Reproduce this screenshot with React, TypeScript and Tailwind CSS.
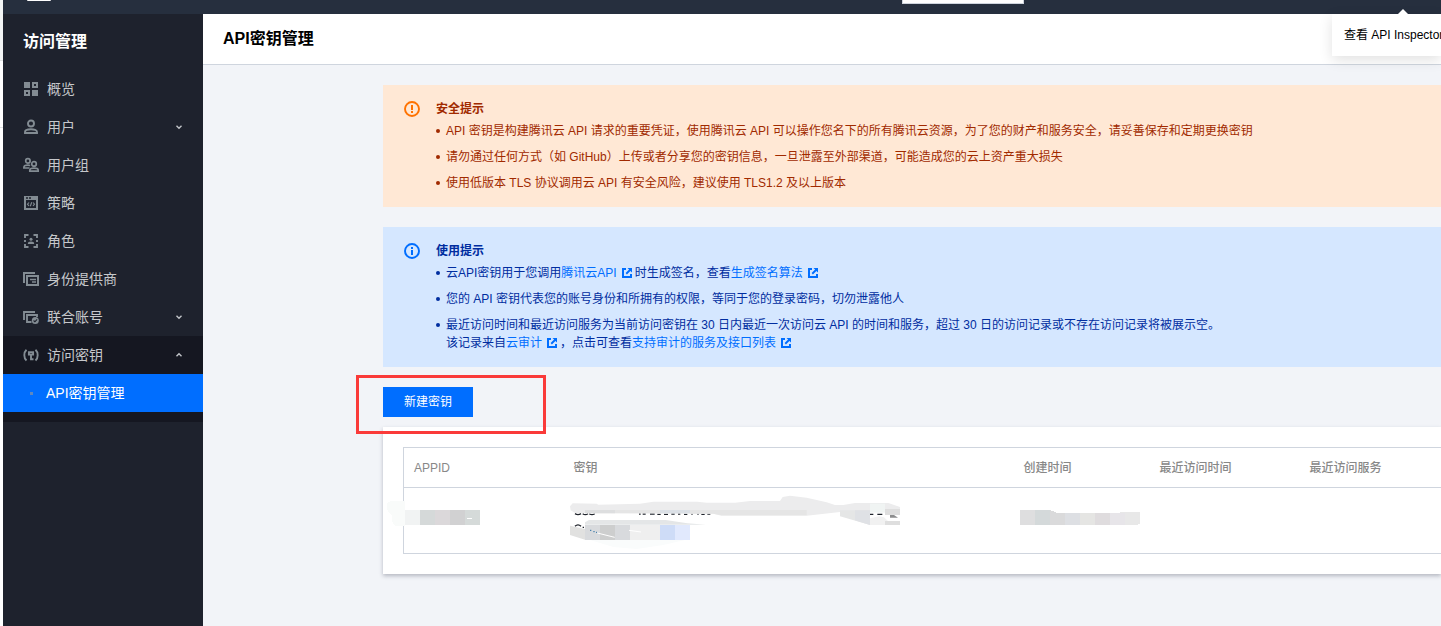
import type { ReactNode } from "react"
import clsx from "clsx"

type IconName = "overview" | "user" | "group" | "policy" | "role" | "provider" | "union" | "key"

const menu: { label: string; icon: IconName; expandable?: boolean }[] = [
  { label: "概览", icon: "overview" },
  { label: "用户", icon: "user", expandable: true },
  { label: "用户组", icon: "group" },
  { label: "策略", icon: "policy" },
  { label: "角色", icon: "role" },
  { label: "身份提供商", icon: "provider" },
  { label: "联合账号", icon: "union", expandable: true },
]

const iconShapes: Record<IconName, ReactNode> = {
  overview: (
    <path
      fill="currentColor"
      fillRule="evenodd"
      d="M1 1h6v6H1zM9 1h6v6H9zM11 3v2h2V3zM1 9h6v6H1zM3 11v2h2v-2zM9 9h6v6H9z"
    />
  ),
  user: (
    <g fill="none" stroke="currentColor" strokeWidth="1.9">
      <circle cx="8" cy="4.5" r="3" />
      <path d="M2 14v-.9C2 11 5 10.300 8 10.300s6 .7 6 2.800v.9z" />
    </g>
  ),
  group: (
    <g fill="none" stroke="currentColor" strokeWidth="1.700">
      <circle cx="4.900" cy="3.900" r="2.200" />
      <path d="M6.500 11H.9v-.6C.9 8.900 2.800 8.200 5 8.200c.8 0 1.500.1 2.200.3" />
      <circle cx="11" cy="6.900" r="2.300" />
      <path d="M6.800 14.100v-.8c0-1.500 2-2.100 4.200-2.100s4.200.6 4.200 2.100v.8z" />
    </g>
  ),
  policy: (
    <g fill="none" stroke="currentColor">
      <path d="M1 1h14v14H1zM3 5v8h10V5z" fill="currentColor" fillRule="evenodd" stroke="none" />
      <path d="M3 3h2M6 3h2" stroke="#1e222d" strokeWidth="1.500" />
      <path d="M6 7.500 4.500 9.200 6 11M10 7.500l1.500 1.700L10 11M8.700 7.200l-1.400 4" strokeWidth="1.100" />
    </g>
  ),
  role: (
    <g fill="none" stroke="currentColor" strokeWidth="1.900">
      <path d="M2 5V2h3.500M10.500 2H14v3M14 11v3h-3.500M5.500 14H2v-3M2 7v2M14 7v2" />
      <circle cx="8" cy="6.200" r="1.500" fill="currentColor" stroke="none" />
      <path d="M4.800 11c0-2 1.200-2.600 3.200-2.600s3.200.6 3.200 2.600z" fill="currentColor" stroke="none" />
    </g>
  ),
  provider: (
    <g fill="none" stroke="currentColor" strokeWidth="2">
      <path d="M1 12V2h11" />
      <path d="M4 5h11v9H4z" />
      <path d="M7 8.500h6M9 11h4" strokeWidth="1.300" />
    </g>
  ),
  union: (
    <g fill="none" stroke="currentColor" strokeWidth="1.900">
      <path d="M1 11V3h11" />
      <path d="M8.500 13H4V6h10v2" />
      <circle cx="12.300" cy="11.500" r="3.500" fill="currentColor" stroke="none" />
      <path d="m10.600 11.500 1.300 1.300 2.200-2.400" stroke="#1e222d" strokeWidth="1.100" />
    </g>
  ),
  key: (
    <g fill="none" stroke="currentColor" strokeWidth="1.900">
      <path d="M3.500 2.800C.6 5.500.6 10.800 3.500 13.500M12.500 2.800c2.900 2.700 2.900 8 0 10.700" />
      <path d="M5.900 5.200h4.200v2.400H5.900zM8 8v5.200M8 12.200h2.500" />
    </g>
  ),
}

function MenuIcon({ name }: { name: IconName }) {
  return (
    <svg viewBox="0 0 16 16" className="size-4 shrink-0 text-[#838c93]" aria-hidden="true">
      {iconShapes[name]}
    </svg>
  )
}

function Chevron({ up }: { up?: boolean }) {
  return (
    <svg viewBox="0 0 8 8" className={clsx("ml-auto size-2", up && "rotate-180")} aria-hidden="true">
      <path d="m1.500 2.800 2.500 2.400 2.500-2.400" fill="none" stroke="#c3c6ca" strokeWidth="1.400" />
    </svg>
  )
}

function ExternalLink({ children }: { children: ReactNode }) {
  return (
    <a href="#" className="text-[#006eff]">
      {children}
      <svg viewBox="0 0 12 12" className="mr-0.5 ml-1 inline-block size-3 align-[-2px]" aria-hidden="true">
        <path d="M5 2H2v8h8V7" fill="none" stroke="currentColor" strokeWidth="2" />
        <path d="M6.500 1H11v4.500L9.400 3.900 5.900 7.400 4.600 6.100l3.500-3.500z" fill="currentColor" />
      </svg>
    </a>
  )
}

function Notice({ tone, title, items }: { tone: "warning" | "info"; title: string; items: ReactNode[] }) {
  const warning = tone === "warning"
  return (
    <section
      className={clsx(
        "flex gap-4 px-[21px] py-[15px] text-xs leading-[18px]",
        warning ? "bg-[#ffe8d5] text-[#a12a00]" : "bg-[#d5e7ff] text-[#002da0]",
      )}
    >
      <svg
        viewBox="0 0 16 16"
        className={clsx("mt-px size-4 shrink-0", warning ? "text-[#ff7200]" : "text-[#006eff]")}
        aria-hidden="true"
      >
        <circle cx="8" cy="8" r="7" fill="none" stroke="currentColor" strokeWidth="1.900" />
        <path
          d={warning ? "M7 4h2v5H7zM7 10h2v2H7z" : "M7 4h2v2H7zM7 7h2v5H7z"}
          fill="currentColor"
        />
      </svg>
      <div className="min-w-0 flex-1">
        <h2 className="mb-1 font-bold">{title}</h2>
        <ul className="flex flex-col gap-2">
          {items.map((item, i) => (
            <li key={i} className="flex gap-1.5">
              <span className="mt-[7px] size-1 shrink-0 rounded-full bg-current" />
              <div>{item}</div>
            </li>
          ))}
        </ul>
      </div>
    </section>
  )
}

function AppIdMask() {
  return (
    <svg viewBox="105 384 300 90" className="absolute top-2.5 -left-[19px] h-[30px] w-[100px]" shapeRendering="crispEdges" aria-hidden="true">
      <path d="M111 402q4-9 20-9h34v75h-27q-12-4-12-20v-12q-15-8-15-28z" fill="#f9fbfa" />
      <path d="M165 420h45v45h-45z" fill="#f1f3f3" />
      <path d="M210 420h45v45h-45z" fill="#d5d9d9" />
      <path d="M255 420h45v45h-45z" fill="#dbd8da" />
      <path d="M300 420h45v45h-45z" fill="#d1d1d2" />
      <path d="M345 420h45v45h-45z" fill="#d5dad9" />
      <path d="M351 443h15v4h-15z" fill="#fff" />
    </svg>
  )
}

function SecretMask() {
  return (
    <svg viewBox="0 0 1050 195" className="absolute -top-[3px] -left-1 h-[65px] w-[350px]" aria-hidden="true">
      <path
        d="M45 86q9 6 18 0M68 86q8 6 16 0M88 86q8 6 16 0M237 87h5M248 87h9M270 87h14M292 88h10M312 88h12M334 87h10M354 87h7M372 88h10M394 87h4M412 87h4M424 88h10M442 87h9M917 84h5M930 88h10M952 88h15"
        fill="none"
        stroke="#20242c"
        strokeWidth="4"
      />
      <path d="M45 124q9-9 18 0M68 127h4" fill="none" stroke="#20242c" strokeWidth="4" />
      <path
        d="M30 64L38 55 110 56 115 59 240 56 280 50H412L440 53H525L570 48H660L668 36 690 32 740 38 800 52 825 60H850L885 54H985L1020 66V80H930V84L840 81 740 92H484L460 86 45 84 32 76z"
        fill="#ececed"
      />
      <path d="M75 75h90v10H75z" fill="#dddedf" />
      <path d="M165 75h135v10H165zM390 75h350v16H484l-24-5h-70z" fill="#e5e5e5" />
      <path d="M300 75h90v10h-90z" fill="#dbe0e6" />
      <path d="M840 76h90v44l-90-26z" fill="#e5e6e6" />
      <path d="M885 76h45v44l-45-14z" fill="#dfe1e5" />
      <path d="M930 56h45v27h-45z" fill="#f0f4f3" />
      <path d="M930 100l28-6 14 3 12 11h36v12h-90z" fill="#f1f1f1" />
      <path d="M975 72h45v18h-45zM975 108h45v12h-45z" fill="#dedede" />
      <path d="M990 90h12l12 8h-24z" fill="#8c8d8e" />
      <path d="M30 122l45 10v32l-45-14z" fill="#e1e1e0" />
      <path d="M75 112l12-7h230l65 10 56 4H75z" fill="#e4e6e7" />
      <path d="M75 120h45v45H75zM165 120h45v45h-45z" fill="#d8dadd" />
      <path d="M120 120h45v45h-45z" fill="#cdcece" />
      <path d="M210 120h90v45h-90z" fill="#efefef" />
      <path d="M300 120h45v45h-45z" fill="#cedcf7" />
      <path d="M345 120h45v45h-45z" fill="#e1e9fd" />
      <path d="M90 165h285l-65 15-80 12-70-6z" fill="#fafcfc" />
      <path d="M112 144l52 13M207 136l36 5" stroke="#fff" strokeWidth="3" />
      <path d="M90 136h4M100 140h4M108 142h3" stroke="#2e72a5" strokeWidth="3" />
    </svg>
  )
}

function CreatedMask() {
  return (
    <svg viewBox="60 210 360 45" className="absolute top-[22px] left-1.5 h-[15px] w-[120px]" shapeRendering="crispEdges" aria-hidden="true">
      <path d="M60 210h45v45H60z" fill="#dededf" />
      <path d="M105 210h45v45h-45z" fill="#d4d9da" />
      <path d="M150 210l20 8h25v37h-45z" fill="#dadadb" />
      <path d="M195 219h45v36h-45z" fill="#dddfe3" />
      <path d="M240 219h45v36h-45z" fill="#e5e5e3" />
      <path d="M285 219h45v36h-45z" fill="#dfdcde" />
      <path d="M330 219h45v36h-45z" fill="#e7e5e9" />
      <path d="M360 216h60v36l-12 3h-33v-36h-15z" fill="#e8e8e8" />
    </svg>
  )
}

function Sidebar() {
  return (
    <aside className="w-[200px] shrink-0 bg-[#1e222d] text-sm text-[#c6c8cb]">
      <h2 className="flex h-14 items-center px-5 text-base font-bold text-white">访问管理</h2>
      <nav>
        {menu.map((item) => (
          <a key={item.label} href="#" className="flex h-[38px] items-center gap-2 px-5">
            <MenuIcon name={item.icon} />
            {item.label}
            {item.expandable && <Chevron />}
          </a>
        ))}
        <div className="bg-[#151721] pb-2.5">
          <a href="#" className="flex h-[38px] items-center gap-2 px-5">
            <MenuIcon name="key" />
            访问密钥
            <Chevron up />
          </a>
          <a href="#" aria-current="page" className="flex h-[38px] items-center gap-[7px] bg-[#006eff] px-5 text-white">
            <span className="flex w-4 justify-center">
              <span className="size-[3px] bg-[#5f88bd]" />
            </span>
            API密钥管理
          </a>
        </div>
      </nav>
    </aside>
  )
}

function KeyTable() {
  return (
    <table className="w-full table-fixed border-collapse border-y border-l border-[#cfd5de] text-left text-xs">
      <colgroup>
        <col className="w-40" />
        <col className="w-[450px]" />
        <col className="w-[136px]" />
        <col className="w-[150px]" />
        <col />
      </colgroup>
      <thead>
        <tr className="h-10 border-b border-[#cfd5de] text-[#888]">
          <th className="px-2.5 font-medium">APPID</th>
          <th className="px-2.5 font-medium">密钥</th>
          <th className="px-2.5 font-medium">创建时间</th>
          <th className="px-2.5 font-medium">最近访问时间</th>
          <th className="px-2.5 font-medium">最近访问服务</th>
        </tr>
      </thead>
      <tbody>
        <tr className="h-[66px]">
          <td className="relative"><AppIdMask /></td>
          <td className="relative"><SecretMask /></td>
          <td className="relative"><CreatedMask /></td>
          <td />
          <td />
        </tr>
      </tbody>
    </table>
  )
}

export default function App() {
  return (
    <div className="flex min-h-screen overflow-hidden bg-[#f2f4f8] font-['Liberation_Sans','Noto_Sans_CJK_SC',sans-serif]">
      <div className="w-[3px] shrink-0 bg-white">
        <div className="h-[61px] border-b border-[#e0e2e2] bg-[#f3f5f5]" />
        <div className="h-[67px] border-b border-[#e0e2e2]" />
      </div>

      <div className="flex min-w-0 flex-1 flex-col">
        <header className="flex h-3.5 items-start bg-[#262f3e]">
          <span className="ml-6 h-px w-6 rounded-b bg-white" />
          <input aria-label="搜索" className="ml-auto h-1 w-[122px] border border-t-0 border-[#cfd5de] bg-white" />
          <div className="w-[417px]" />
        </header>

        <div className="flex flex-1">
          <Sidebar />

          <main className="min-w-0 flex-1">
            <div className="relative flex h-[51px] items-center border-b border-[#cfd5de] bg-white px-5">
              <h1 className="text-base font-bold text-black">API密钥管理</h1>
              <div className="absolute top-0 right-0 h-[42px] w-[109px] bg-white pl-3 text-xs leading-[42px] whitespace-nowrap text-black shadow-[0_4px_14px_rgba(0,0,0,0.12)]">
                查看 API Inspector
              </div>
              <svg viewBox="0 0 10 5" className="absolute right-[33px] bottom-full h-[5px] w-2.5" aria-hidden="true">
                <path d="M0 5 5 0l5 5z" fill="#fff" />
              </svg>
            </div>

            <div className="pt-5 pb-12 pl-[180px]">
              <div className="flex flex-col gap-5">
                <Notice
                  tone="warning"
                  title="安全提示"
                  items={[
                    "API 密钥是构建腾讯云 API 请求的重要凭证，使用腾讯云 API 可以操作您名下的所有腾讯云资源，为了您的财产和服务安全，请妥善保存和定期更换密钥",
                    "请勿通过任何方式（如 GitHub）上传或者分享您的密钥信息，一旦泄露至外部渠道，可能造成您的云上资产重大损失",
                    "使用低版本 TLS 协议调用云 API 有安全风险，建议使用 TLS1.2 及以上版本",
                  ]}
                />
                <Notice
                  tone="info"
                  title="使用提示"
                  items={[
                    <>
                      云API密钥用于您调用<ExternalLink>腾讯云API</ExternalLink>时生成签名，查看
                      <ExternalLink>生成签名算法</ExternalLink>
                    </>,
                    "您的 API 密钥代表您的账号身份和所拥有的权限，等同于您的登录密码，切勿泄露他人",
                    <>
                      最近访问时间和最近访问服务为当前访问密钥在 30 日内最近一次访问云 API 的时间和服务，超过 30 日的访问记录或不存在访问记录将被展示空。
                      <br />
                      该记录来自<ExternalLink>云审计</ExternalLink>，点击可查看
                      <ExternalLink>支持审计的服务及接口列表</ExternalLink>
                    </>,
                  ]}
                />
                <div className="relative flex">
                  <button type="button" className="h-[30px] bg-[#006eff] px-[21px] text-xs text-white">
                    新建密钥
                  </button>
                  {/* highlight frame round the create button */}
                  <div className="pointer-events-none absolute -top-3 -left-[27px] z-10 h-[59px] w-[190px] border-3 border-[#fa3a39]" />
                </div>
              </div>

              <div className="mt-2.5 bg-white py-5 pl-5 shadow-[0_2px_4px_rgba(54,58,80,0.32)]">
                <KeyTable />
              </div>
            </div>
          </main>
        </div>
      </div>
    </div>
  )
}
